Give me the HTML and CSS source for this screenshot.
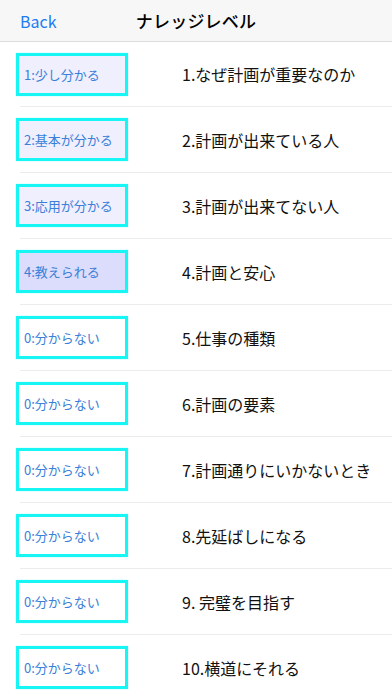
FILE: index.html
```html
<!DOCTYPE html>
<html lang="ja">
<head>
<meta charset="utf-8">
<link rel="stylesheet" href="styles.css">
</head>
<body>
<header class="nav">
  <span class="back">Back</span>
  <span class="title">ナレッジレベル</span>
</header>
<ul class="list">
  <li class="row"><div class="level l1">1:少し分かる</div><div class="label">1.なぜ計画が重要なのか</div></li>
  <li class="row"><div class="level l1">2:基本が分かる</div><div class="label">2.計画が出来ている人</div></li>
  <li class="row"><div class="level l1">3:応用が分かる</div><div class="label">3.計画が出来てない人</div></li>
  <li class="row"><div class="level l4">4:教えられる</div><div class="label">4.計画と安心</div></li>
  <li class="row"><div class="level">0:分からない</div><div class="label">5.仕事の種類</div></li>
  <li class="row"><div class="level">0:分からない</div><div class="label">6.計画の要素</div></li>
  <li class="row"><div class="level">0:分からない</div><div class="label">7.計画通りにいかないとき</div></li>
  <li class="row"><div class="level">0:分からない</div><div class="label">8.先延ばしになる</div></li>
  <li class="row"><div class="level">0:分からない</div><div class="label">9. 完璧を目指す</div></li>
  <li class="row"><div class="level">0:分からない</div><div class="label">10.横道にそれる</div></li>
</ul>
</body>
</html>
```
FILE: styles.css
```css
* { box-sizing: border-box; }
html, body {
  margin: 0;
  padding: 0;
  background: #ffffff;
  font-family: "Noto Sans CJK JP", "Noto Sans", sans-serif;
  overflow: hidden;
  height: 696px;
}
.nav {
  height: 42px;
  background: #f7f7f7;
  border-bottom: 1px solid #dcdcdc;
  display: flex;
  align-items: center;
  justify-content: center;
  position: relative;
}
.back {
  position: absolute;
  left: 20px;
  top: 10px;
  color: #1c7cf4;
  font-size: 16px;
  line-height: 22px;
}
.title {
  font-size: 17px;
  font-weight: 500;
  color: #000;
  letter-spacing: 0.2px;
}
.list {
  list-style: none;
  margin: 0;
  padding: 0;
}
.row {
  height: 66px;
  display: flex;
  align-items: center;
  margin-left: 20px;
  border-bottom: 1px solid #ececec;
}
.row:first-child { height: 65px; }
.level {
  width: 112px;
  height: 43px;
  margin-left: -4px;
  border: 3px solid #17f5f5;
  box-shadow: 0 0 1px #7ff;
  background: #ffffff;
  color: #3a80d8;
  font-size: 13px;
  display: flex;
  align-items: center;
  padding-left: 5px;
  flex-shrink: 0;
}
.level.l1 { background: #efeffe; }
.level.l4 { background: #dcdcfc; }
.label {
  margin-left: 54px;
  font-size: 16px;
  color: #111;
  white-space: nowrap;
}
```
